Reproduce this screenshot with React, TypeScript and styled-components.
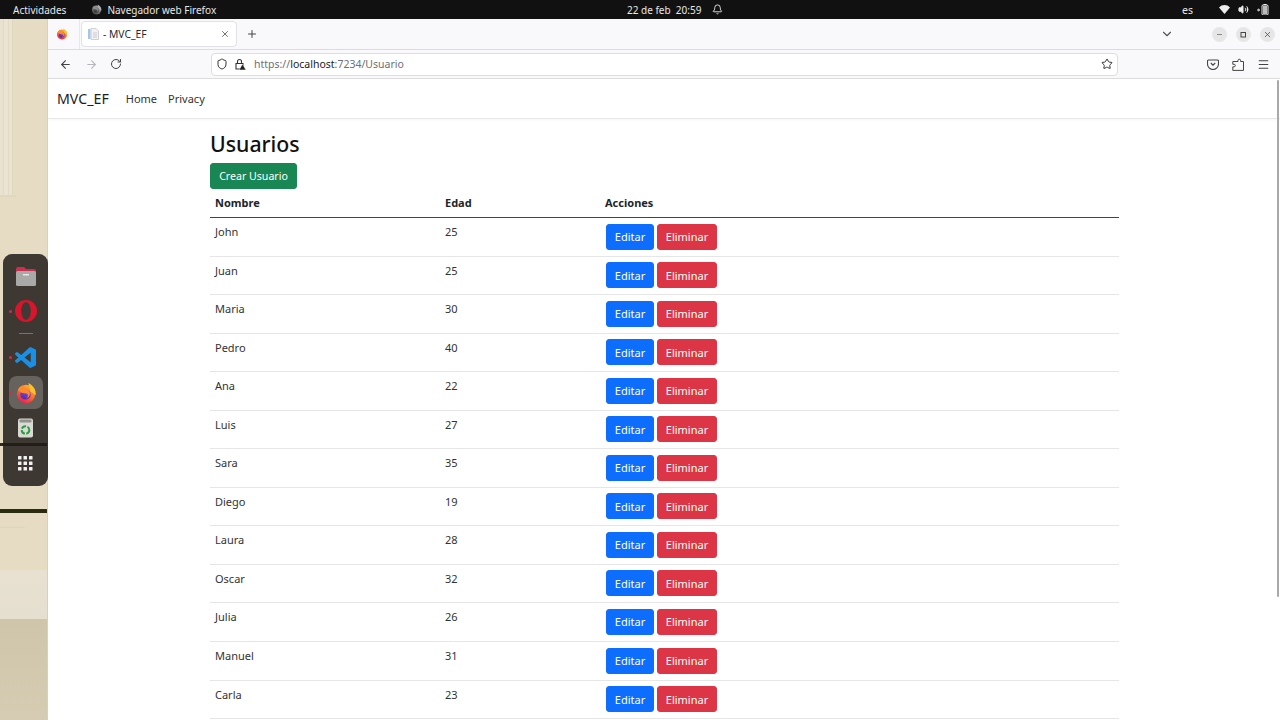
import React from "react";
import styled, { createGlobalStyle } from "styled-components";
import { ArrowLeft, ArrowRight, RotateCw, Shield, Star, Menu, X, Plus, ChevronDown, Minus, Bell, Volume2 } from "lucide-react";

const Global = createGlobalStyle`
  html, body { margin: 0; padding: 0; background: #fff; overflow: hidden; }
  * { box-sizing: border-box; }
`;

const FONT = `"Noto Sans", "Open Sans", sans-serif`;

const Screen = styled.div`
  position: relative; width: 1280px; height: 720px; overflow: hidden;
  display: flex; flex-direction: column; font-family: ${FONT}; color: #212529;
`;
const TopBar = styled.div`
  height: 19px; flex: none; background: #111; color: #e8e8e8; font-size: 10px;
  display: grid; grid-template-columns: 614px auto 1fr; align-items: center; padding: 0 11px 0 13px;
`;
const TopLeft = styled.div`display: flex; align-items: center; gap: 25px;`;
const AppName = styled.span`display: flex; align-items: center; gap: 5px;`;
const GreyIcon = styled.span`display: flex; filter: grayscale(1) brightness(.9);`;
const Clock = styled.div`display: flex; align-items: center; gap: 11px;`;
const TopRight = styled.div`display: flex; align-items: center; justify-content: flex-end; gap: 0;`;
const Lang = styled.span`margin-right: 26px; font-size: 10.5px;`;
const Status = styled.div`display: flex; align-items: center; gap: 8px;`;

const Body = styled.div`flex: 1; display: flex; min-height: 0;`;
const Wallpaper = styled.div`
  width: 48px; flex: none; border-right: 1px solid #d5d0c6;
  background:
    linear-gradient(#e0d7bf, #e0d7bf) 0 176px / 16px 2px no-repeat,
    linear-gradient(90deg, #e9e2cf 0 3px, #e3dac3 3px 4px, #ebe4d3 4px 8px, #e3dac3 8px 9px, #eae3d1 9px 12px, #e0d7bf 12px 13px, #e6dcc6 13px 16px, transparent 16px) 0 0 / 48px 178px no-repeat,
    linear-gradient(#2a2c12, #2a2c12) 0 490px / 48px 4px no-repeat,
    linear-gradient(#2f2b20, #2f2b20) 0 424px / 48px 3px no-repeat,
    linear-gradient(#ddd4bb, #ddd4bb) 0 508px / 25px 1px no-repeat,
    linear-gradient(#e8e1d0, #e5dfd0) 0 551px / 48px 49px no-repeat,
    linear-gradient(#cfc5aa, #d6ccb3) 0 600px / 48px 101px no-repeat,
    #e6dcc4;
`;
const Browser = styled.div`flex: 1; display: flex; flex-direction: column; min-width: 0; background: #fff;`;
const TabBar = styled.div`
  height: 31px; flex: none; background: #f9f9fb; border-bottom: 1px solid #dcdcdc;
  display: flex; align-items: center; padding-left: 8px;
`;
const TabFavicon = styled.div`
  width: 24px; height: 30px; display: flex; align-items: center; margin-right: 1px; border-right: 1px solid #e8e8ec;
`;
const Tab = styled.div`
  width: 156px; height: 26px; background: #fff; border: 1px solid #e2e2e6; border-radius: 4px;
  display: flex; align-items: center; padding: 0 6px; font-size: 10.3px; color: #2b2a33; gap: 4px;
`;
const TabTitle = styled.span`flex: 1;`;
const NewTab = styled.div`margin-left: 9px; display: flex; color: #444;`;
const TabSpacer = styled.div`flex: 1;`;
const WinControls = styled.div`display: flex; align-items: center; gap: 9px; margin-left: 38px; margin-right: 5px;`;
const WinBtn = styled.div`
  width: 15px; height: 15px; border-radius: 50%; background: #e6e6e6; color: #444;
  display: flex; align-items: center; justify-content: center;
`;
const NavBar = styled.div`
  height: 29px; flex: none; background: #f9f9fb; border-bottom: 1px solid #dcdcdc;
  display: flex; align-items: center; padding-left: 11px;
`;
const NavIcons = styled.div`display: flex; align-items: center; gap: 12.5px; width: 152px; color: #444;`;
const UrlBar = styled.div`
  width: 907px; height: 23px; background: #fff; border: 1px solid #dedee2; border-radius: 4px;
  display: flex; align-items: center; padding: 0 4px; font-size: 10.5px; color: #6e6e78; gap: 6px;
`;
const UrlText = styled.span`flex: 1; margin-left: 2px; b { font-weight: 400; color: #1c1b22; }`;
const NavRight = styled.div`display: flex; align-items: center; gap: 13px; margin-left: 89px; color: #444;`;

const Page = styled.div`flex: 1; min-height: 0; overflow: hidden; background: #fff;`;
const SiteNav = styled.div`
  height: 40px; border-bottom: 1px solid #e8e8e8; box-shadow: 0 1px 3px rgba(0,0,0,.04);
  display: flex; align-items: center; padding-left: 9px; color: #1c1c1c;
`;
const Brand = styled.span`font-size: 14.2px; margin-right: 17px;`;
const NavLink = styled.span`font-size: 11px; margin-right: 11px; color: #333;`;
const Main = styled.div`width: 909px; margin-left: 162px;`;
const Title = styled.h1`
  font-size: 21.3px; font-weight: 500; margin: 10px 0 4px; line-height: 30px; color: #111;
`;
const Btn = styled.button<{ $color: string }>`
  background: ${p => p.$color}; color: #fff; border: 1px solid ${p => p.$color}; border-radius: 3px;
  font-family: ${FONT}; font-size: 11px; height: 26px; padding: 0; display: inline-flex;
  align-items: center; justify-content: center;
`;
const CreateBtn = styled(Btn)`width: 87px; font-size: 10.6px;`;
const EditBtn = styled(Btn)`width: 48px; margin-right: 3px;`;
const DelBtn = styled(Btn)`width: 60px;`;
const Table = styled.table`
  width: 909px; table-layout: fixed; border-collapse: collapse; font-size: 11px;
`;
const Th = styled.th`
  text-align: left; font-weight: 700; height: 28.5px; padding: 0 5px 2px; border-bottom: 1px solid #444; color: #212529;
`;
const Tr = styled.tr`height: 38.55px;`;
const Td = styled.td`
  vertical-align: top; padding: 6px 5px 0; border-bottom: 1px solid #e6e6e6; line-height: 15px; color: #333;
`;
const ActionTd = styled(Td)`padding: 5.5px 5px 0 6px;`;

const Dock = styled.div`
  position: absolute; left: 3px; top: 254px; width: 45px; height: 232px; border-radius: 9px;
  background: rgba(30, 27, 24, .85); display: flex; flex-direction: column; align-items: center;
`;
const DockItem = styled.div<{ $h: number; $active?: boolean }>`
  width: 34px; height: ${p => p.$h}px; border-radius: 8px; display: flex; align-items: center; justify-content: center;
  background: ${p => (p.$active ? "#66625e" : "transparent")}; flex: none;
`;
const DockSep = styled.div`width: 14px; height: 1px; background: #77736f; margin: 0 0 7px;`;
const Dot = styled.span<{ $top: number }>`
  position: absolute; left: 6px; top: ${p => p.$top}px; width: 3px; height: 3px; border-radius: 50%; background: #c9304a;
`;
const Scrollbar = styled.div`
  position: absolute; right: 1px; top: 80px; width: 2.5px; height: 517px; background: #a9a9a9; border-radius: 1px;
`;

const Firefox = ({ s }: { s: number }) => (
  <svg width={s} height={s} viewBox="0 0 24 24">
    <defs>
      <linearGradient id="ff" x1="0.8" y1="0" x2="0.2" y2="1">
        <stop offset="0" stopColor="#ffc02e" /><stop offset=".5" stopColor="#ff6a2b" /><stop offset="1" stopColor="#e3195a" />
      </linearGradient>
      <linearGradient id="ffg" x1="0.7" y1="0" x2="0.3" y2="1">
        <stop offset="0" stopColor="#8a56f0" /><stop offset="1" stopColor="#4a2aa8" />
      </linearGradient>
    </defs>
    <circle cx="12" cy="13" r="10" fill="url(#ff)" />
    <path d="M14.500 1C18.500 3 23.500 7.500 22.500 14.500L17 10z" fill="#ffc02e" />
    <circle cx="11.500" cy="13.500" r="5.700" fill="url(#ffg)" />
    <path d="M3 9C4 6.500 6 4.500 8 3.800 7.500 5 8 6.200 9 7c3 0 6 1 7 4 1 3-1 6.500-4 7 3-2 2.500-5 .5-5.500C10 12 7 12.500 5 10z" fill="#ff8a2b" />
  </svg>
);
const Opera = () => (
  <svg width="22" height="22" viewBox="0 0 22 22">
    <ellipse cx="11" cy="11" rx="11" ry="11" fill="#d7152c" />
    <ellipse cx="11" cy="11" rx="4.800" ry="9" fill="#3f3a36" />
  </svg>
);
const VSCode = () => (
  <svg width="21" height="21" viewBox="0 0 24 24">
    <path fill="#1a8fe3" d="M23.15 2.587L18.21.21a1.494 1.494 0 0 0-1.705.29l-9.46 8.63-4.12-3.128a.999.999 0 0 0-1.276.057L.327 7.261A1 1 0 0 0 .326 8.74L3.899 12 .326 15.26a1 1 0 0 0 .001 1.479L1.65 17.94a.999.999 0 0 0 1.276.057l4.12-3.128 9.46 8.63a1.492 1.492 0 0 0 1.704.29l4.942-2.377A1.5 1.5 0 0 0 24 20.06V3.939a1.5 1.5 0 0 0-.85-1.352zm-5.146 14.861L10.826 12l7.178-5.448v10.896z" />
  </svg>
);
const Files = () => (
  <svg width="22" height="21" viewBox="0 0 22 21">
    <path d="M1 3a2 2 0 0 1 2-2h6l2 2h8a2 2 0 0 1 2 2v3H1z" fill="#c7304f" />
    <rect x="1" y="5" width="20" height="15" rx="1.500" fill="#a9a9a7" />
    <rect x="8" y="8" width="6" height="1.500" fill="#e8e8e8" />
  </svg>
);
const Trash = () => (
  <svg width="17" height="20" viewBox="0 0 17 20">
    <rect x="1" y="0.500" width="15" height="19" rx="2" fill="#d9dad3" />
    <rect x="2.500" y="1.500" width="12" height="3" rx="1" fill="#8f918c" />
    <circle cx="8.500" cy="12" r="3.800" fill="none" stroke="#2f9a46" strokeWidth="2" strokeDasharray="5 1.500" />
  </svg>
);
const AppGrid = () => (
  <svg width="15" height="15" viewBox="0 0 15 15" fill="#f2f2f2">
    {[0, 5.500, 11].flatMap(y => [0, 5.500, 11].map(x => <rect key={`${x}-${y}`} x={x} y={y} width="3.500" height="3.500" rx=".6" />))}
  </svg>
);
const Wifi = () => (
  <svg width="11" height="9" viewBox="0 0 11 9"><path d="M0 2.500C3-.8 8-.8 11 2.500L5.500 9z" fill="#eee" /></svg>
);
const Battery = () => (
  <svg width="12" height="11" viewBox="0 0 12 11" fill="#eee">
    <path d="M0 5.500h1.500V4L3 6 1.500 8V6.500H0z" />
    <rect x="5" y="1" width="6" height="10" rx="1" fill="none" stroke="#eee" />
    <rect x="6" y="2" width="4" height="8" fill="#bbb" />
    <rect x="6.500" y="0" width="3" height="1" />
  </svg>
);
const TabPage = () => (
  <svg width="11" height="12" viewBox="0 0 11 12">
    <rect x="0" y="1" width="2.500" height="10" fill="#a6c6e6" />
    <path d="M3 .5h5l2.500 2.500v8.500H3z" fill="#f2f2f4" stroke="#c5c5cc" strokeWidth=".8" />
    <path d="M5 5h4M5 7h4M5 9h4" stroke="#c0c0c8" strokeWidth=".8" />
  </svg>
);
const Pocket = () => (
  <svg width="12" height="11" viewBox="0 0 12 11" fill="none" stroke="#444" strokeWidth="1.100">
    <path d="M1.500 1h9a1 1 0 0 1 1 1v3a5.500 5.500 0 0 1-11 0V2a1 1 0 0 1 1-1z" />
    <path d="M3.800 4L6 6.200 8.200 4" />
  </svg>
);
const LockWarn = () => (
  <svg width="12" height="12" viewBox="0 0 12 12">
    <path d="M2 5.500h7v5.500H2zM3.500 5.500V3.500a2 2 0 0 1 4 0v2" fill="none" stroke="#333" strokeWidth="1.100" />
    <path d="M8.500 6l3.500 6H5z" fill="#222" stroke="#fff" strokeWidth=".5" />
  </svg>
);
const Extension = () => (
  <svg width="12" height="13" viewBox="0 0 12 13" fill="none" stroke="#444" strokeWidth="1">
    <path d="M6 3.500V2.200C6 .9 8.600.9 8.600 2.200v1.300h2.900v8.900H.8V8.800h1.400c1.500 0 1.500-2.500 0-2.500H.8V3.500z" />
  </svg>
);

const users: [string, number][] = [
  ["John", 25], ["Juan", 25], ["Maria", 30], ["Pedro", 40], ["Ana", 22], ["Luis", 27], ["Sara", 35],
  ["Diego", 19], ["Laura", 28], ["Oscar", 32], ["Julia", 26], ["Manuel", 31], ["Carla", 23],
];

export default function App() {
  return (
    <Screen>
      <Global />
      <TopBar>
        <TopLeft>
          <span>Actividades</span>
          <AppName><GreyIcon><Firefox s={11} /></GreyIcon>Navegador web Firefox</AppName>
        </TopLeft>
        <Clock><span>22 de feb&nbsp; 20:59</span><Bell size={11} /></Clock>
        <TopRight>
          <Lang>es</Lang>
          <Status><Wifi /><Volume2 size={11} fill="#eee" /><Battery /></Status>
        </TopRight>
      </TopBar>
      <Body>
        <Wallpaper />
        <Browser>
          <TabBar>
            <TabFavicon><Firefox s={12} /></TabFavicon>
            <Tab>
              <TabPage />
              <TabTitle>- MVC_EF</TabTitle>
              <X size={10} color="#555" />
            </Tab>
            <NewTab><Plus size={12} /></NewTab>
            <TabSpacer />
            <ChevronDown size={14} color="#555" />
            <WinControls>
              <WinBtn><Minus size={7} /></WinBtn>
              <WinBtn><svg width="7" height="7" viewBox="0 0 7 7" fill="none" stroke="#444"><rect x="1" y="1.500" width="4.500" height="4.500" /></svg></WinBtn>
              <WinBtn><X size={9} /></WinBtn>
            </WinControls>
          </TabBar>
          <NavBar>
            <NavIcons>
              <ArrowLeft size={13} />
              <ArrowRight size={13} color="#b8b8bc" />
              <RotateCw size={12} />
            </NavIcons>
            <UrlBar>
              <Shield size={12} color="#333" />
              <LockWarn />
              <UrlText>https://<b>localhost</b>:7234/Usuario</UrlText>
              <Star size={12} color="#333" />
            </UrlBar>
            <NavRight>
              <Pocket />
              <Extension />
              <Menu size={13} />
            </NavRight>
          </NavBar>
          <Page>
            <SiteNav>
              <Brand>MVC_EF</Brand>
              <NavLink>Home</NavLink>
              <NavLink>Privacy</NavLink>
            </SiteNav>
            <Main>
              <Title>Usuarios</Title>
              <CreateBtn $color="#198754">Crear Usuario</CreateBtn>
              <Table>
                <colgroup><col width="230" /><col width="160" /><col width="519" /></colgroup>
                <thead><tr><Th>Nombre</Th><Th>Edad</Th><Th>Acciones</Th></tr></thead>
                <tbody>
                  {users.map(([n, a]) => (
                    <Tr key={n}>
                      <Td>{n}</Td>
                      <Td>{a}</Td>
                      <ActionTd>
                        <EditBtn $color="#0d6efd">Editar</EditBtn>
                        <DelBtn $color="#dc3545">Eliminar</DelBtn>
                      </ActionTd>
                    </Tr>
                  ))}
                </tbody>
              </Table>
            </Main>
          </Page>
        </Browser>
      </Body>
      <Dock>
        <DockItem $h={8} />
        <DockItem $h={28}><Files /></DockItem>
        <DockItem $h={8} />
        <DockItem $h={26}><Opera /></DockItem>
        <DockItem $h={9} />
        <DockSep />
        <DockItem $h={32}><VSCode /></DockItem>
        <DockItem $h={3} />
        <DockItem $h={33} $active><Firefox s={22} /></DockItem>
        <DockItem $h={7} />
        <DockItem $h={24}><Trash /></DockItem>
        <DockItem $h={13} />
        <DockItem $h={20}><AppGrid /></DockItem>
        <Dot $top={56} />
        <Dot $top={102} />
        <Dot $top={138} />
      </Dock>
      <Scrollbar />
    </Screen>
  );
}
